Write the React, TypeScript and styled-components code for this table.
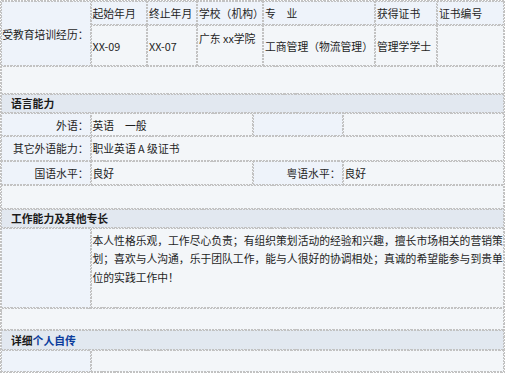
import styled, { createGlobalStyle, css } from 'styled-components';

const LINE = '#c2c2c2';
const LABEL_BG = '#eef3fa';
const VALUE_BG = '#f3f6f9';
const HEAD_BG = '#e2e8f0';

const GlobalStyle = createGlobalStyle`
  html, body {
    margin: 0;
    padding: 0;
    background: #ffffff;
  }
  body {
    font-family: "Noto Sans CJK SC", "Noto Sans", sans-serif;
    font-size: 10.8px;
    color: #1e1e1e;
  }
`;

// fine dashed rule, denser than the browser's own dashed style
const dashed = css`
  border: 1px solid transparent;
  border-image: repeating-linear-gradient(
      45deg,
      ${LINE} 0 1.6px,
      transparent 1.6px 2.3px
    )
    1;
`;

const Sheet = styled.div`
  width: 505px;
  box-sizing: border-box;
  ${dashed};
`;

const Grid = styled.div<{ $cols: string; $rows: string }>`
  display: grid;
  grid-template-columns: ${(p) => p.$cols};
  grid-template-rows: ${(p) => p.$rows};
`;

const Cell = styled.div<{
  $label?: boolean;
  $right?: boolean;
  $top?: boolean;
  $span?: number;
  $rowSpan?: number;
}>`
  box-sizing: border-box;
  min-width: 0;
  ${dashed};
  background: ${(p) => (p.$label ? LABEL_BG : VALUE_BG)};
  display: flex;
  align-items: ${(p) => (p.$top ? 'flex-start' : 'center')};
  justify-content: ${(p) => (p.$right ? 'flex-end' : 'flex-start')};
  padding: ${(p) => (p.$top ? '3px' : '0')} 1px 0 1px;
  line-height: 18px;
  white-space: nowrap;
  grid-column: span ${(p) => p.$span ?? 1};
  grid-row: span ${(p) => p.$rowSpan ?? 1};
`;

const Blank = styled.div<{ $h: number }>`
  box-sizing: border-box;
  height: ${(p) => p.$h}px;
  ${dashed};
  background: ${VALUE_BG};
`;

const SectionTitle = styled.div<{ $h: number }>`
  box-sizing: border-box;
  height: ${(p) => p.$h}px;
  ${dashed};
  background: ${HEAD_BG};
  display: flex;
  align-items: center;
  padding-left: 9px;
  font-weight: bold;
  color: #1a1a1a;
`;

const Accent = styled.span`
  color: #0b3c9c;
`;

const Paragraph = styled.div`
  box-sizing: border-box;
  ${dashed};
  background: ${VALUE_BG};
  padding: 2px 0 0 1px;
  line-height: 18.5px;
`;

const EDU_COLS = '89.5px 56.5px 50px 66px 112px 62px 67px';
const LANG_COLS = '89.5px 162.5px 89.5px 161.5px';
const PAIR_COLS = '89.5px 1fr';

export default function App() {
  return (
    <>
      <GlobalStyle />
      <Sheet>
        <Grid $cols={EDU_COLS} $rows="24px 41px">
          <Cell $label $right $rowSpan={2}>受教育培训经历：</Cell>
          <Cell $label>起始年月</Cell>
          <Cell $label>终止年月</Cell>
          <Cell $label>学校（机构）</Cell>
          <Cell $label>专　业</Cell>
          <Cell $label>获得证书</Cell>
          <Cell $label>证书编号</Cell>
          <Cell>XX-09</Cell>
          <Cell>XX-07</Cell>
          <Cell $top>广东 xx学院</Cell>
          <Cell>工商管理（物流管理）</Cell>
          <Cell>管理学学士</Cell>
          <Cell />
        </Grid>
        <Blank $h={27.5} />

        <SectionTitle $h={19.5}>语言能力</SectionTitle>
        <Grid $cols={LANG_COLS} $rows="23px 24.5px 24px">
          <Cell $label $right>外语：</Cell>
          <Cell>英语　一般</Cell>
          <Cell $label />
          <Cell />
          <Cell $label $right>其它外语能力：</Cell>
          <Cell $span={3}>职业英语 A 级证书</Cell>
          <Cell $label $right>国语水平：</Cell>
          <Cell>良好</Cell>
          <Cell $label $right>粤语水平：</Cell>
          <Cell>良好</Cell>
        </Grid>
        <Blank $h={24} />

        <SectionTitle $h={19.2}>工作能力及其他专长</SectionTitle>
        <Grid $cols={PAIR_COLS} $rows="80px">
          <Cell $label />
          <Paragraph>
            本人性格乐观，工作尽心负责；有组织策划活动的经验和兴趣，擅长市场相关的营销策划；喜欢与人沟通，乐于团队工作，能与人很好的协调相处；真诚的希望能参与到贵单位的实践工作中！
          </Paragraph>
        </Grid>
        <Blank $h={22.6} />

        <SectionTitle $h={20}>
          详细<Accent>个人自传</Accent>
        </SectionTitle>
        <Grid $cols={PAIR_COLS} $rows="22px">
          <Cell $label />
          <Cell />
        </Grid>
      </Sheet>
    </>
  );
}
